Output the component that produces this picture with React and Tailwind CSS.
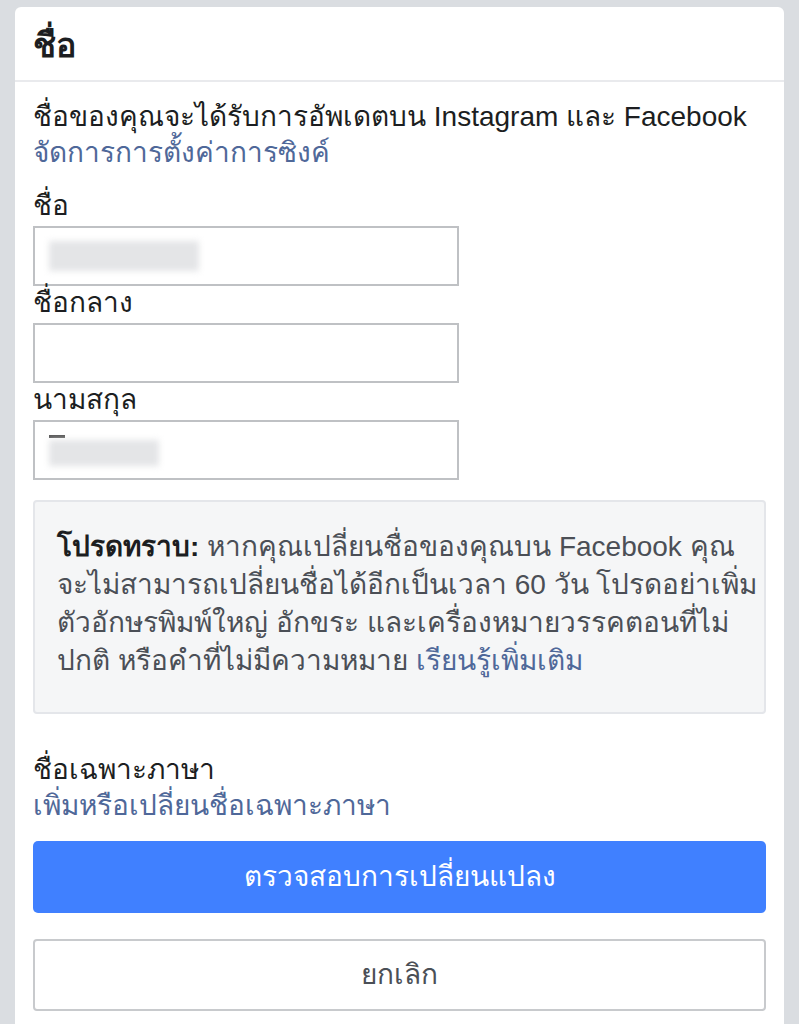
import React from 'react';

const font = { fontFamily: '"Liberation Sans", "Noto Sans", sans-serif' };

const Field = ({ label, blur }) => (
  <div>
    <div className="text-[28px] leading-[34px] text-[#1c1e21]">{label}</div>
    <div className="mt-[3px] flex h-[60px] w-[426px] items-center border-2 border-[#bfc1c4] bg-white px-[14px]">
      {blur === 'first' && (
        <div className="h-[30px] w-[150px] bg-[#e4e5e7] blur-[3px]" />
      )}
      {blur === 'last' && (
        <div className="flex flex-col gap-[2px]">
          <div className="h-[3px] w-[16px] bg-[#555]" />
          <div className="h-[26px] w-[110px] bg-[#e4e5e7] blur-[3px]" />
        </div>
      )}
    </div>
  </div>
);

export default function App() {
  return (
    <div className="min-h-screen bg-[#dadde1] pt-[7px] px-[15px]" style={font}>
      <div className="min-h-[1017px] rounded-t-[6px] bg-white">
        {/* Header */}
        <div className="flex h-[75px] items-center border-b-2 border-[#e9eaed] px-[18px] pt-[3px]">
          <h1 className="text-[34px] font-bold text-[#1c1e21]">ชื่อ</h1>
        </div>

        <div className="px-[18px] pt-[17px]">
          <p className="text-[28px] leading-[36px] text-[#1c1e21]">
            ชื่อของคุณจะได้รับการอัพเดตบน Instagram และ Facebook
          </p>
          <a className="block text-[28px] leading-[36px] text-[#4f6899]">จัดการการตั้งค่าการซิงค์</a>

          <div className="mt-[18px] flex flex-col">
            <Field label="ชื่อ" blur="first" />
            <Field label="ชื่อกลาง" />
            <Field label="นามสกุล" blur="last" />
          </div>

          <div className="mt-[20px] rounded-[4px] border-2 border-[#e4e6ea] bg-[#f5f6f7] pl-[22px] pr-[8px] pt-[26px] pb-[32px]">
            <div className="whitespace-nowrap text-[28px] leading-[38px] text-[#4b4f56]">
              <div><span className="font-bold text-[#1c1e21]">โปรดทราบ:</span> หากคุณเปลี่ยนชื่อของคุณบน Facebook คุณ</div>
              <div>จะไม่สามารถเปลี่ยนชื่อได้อีกเป็นเวลา 60 วัน โปรดอย่าเพิ่ม</div>
              <div>ตัวอักษรพิมพ์ใหญ่ อักขระ และเครื่องหมายวรรคตอนที่ไม่</div>
              <div>ปกติ หรือคำที่ไม่มีความหมาย <a className="text-[#4f6899]">เรียนรู้เพิ่มเติม</a></div>
            </div>
          </div>

          <div className="mt-[38px] text-[28px] leading-[36px] text-[#1c1e21]">ชื่อเฉพาะภาษา</div>
          <a className="block text-[28px] leading-[36px] text-[#4f6899]">เพิ่มหรือเปลี่ยนชื่อเฉพาะภาษา</a>

          <button className="mt-[17px] flex h-[72px] w-full items-center justify-center rounded-[5px] bg-[#4080ff] text-[28px] text-white">
            ตรวจสอบการเปลี่ยนแปลง
          </button>
          <button className="mt-[26px] flex h-[72px] w-full items-center justify-center rounded-[4px] border-2 border-[#c8cacd] bg-white text-[28px] text-[#4b4f56]">
            ยกเลิก
          </button>
        </div>
      </div>
    </div>
  );
}
